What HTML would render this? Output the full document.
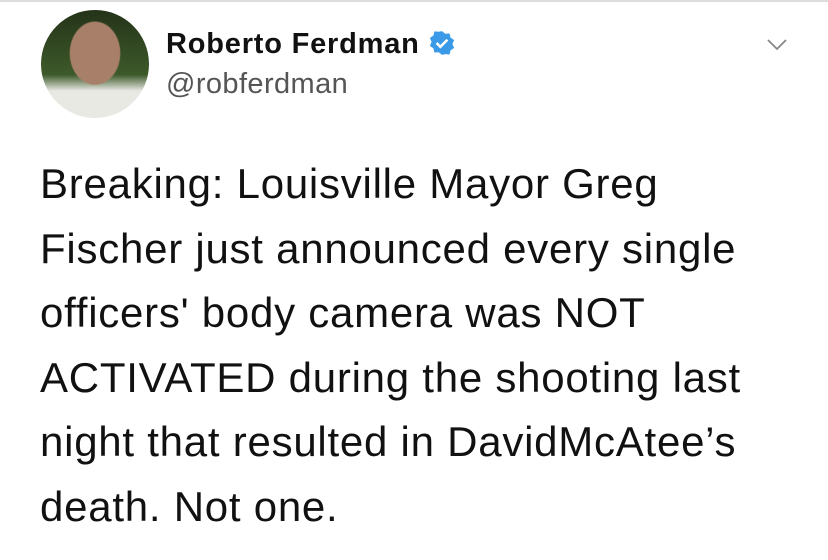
<!DOCTYPE html>
<html><head><style>
body{margin:0;width:828px;height:560px;background:#fff;overflow:hidden;font-family:"Liberation Sans",sans-serif;position:relative}
.top{position:absolute;top:0;left:0;width:828px;height:2px;background:#ddd}
.av{position:absolute;left:41px;top:10px;width:108px;height:108px;border-radius:50%;background:radial-gradient(ellipse 24% 30% at 50% 40%,#a8806a 0 95%,transparent 100%),linear-gradient(#243318,#3d5a2a 60%,#e9e9e4 75%);overflow:hidden}
.name{position:absolute;left:166px;top:28px;font-size:29px;font-weight:bold;color:#111;letter-spacing:0.8px}
.handle{position:absolute;left:166px;top:68px;font-size:29px;color:#555;letter-spacing:0.4px}
.txt{position:absolute;left:40px;top:152px;font-size:42px;line-height:64.5px;color:#111;letter-spacing:0.75px;white-space:nowrap}
</style></head><body>
<div class="top"></div>
<div class="av"></div>
<div class="name">Roberto Ferdman <svg width="26" height="26" viewBox="0 0 24 24" style="vertical-align:-3px"><path d="M12 1l3 2.5 4-.3.9 3.8 3.3 2.3-1.6 3.6 1.6 3.6-3.3 2.3-.9 3.8-4-.3L12 23l-3-2.5-4 .3-.9-3.8L.8 14.7 2.4 11 .8 7.4l3.3-2.3L5 1.3l4 .3z" fill="#3a9ae8"/><path d="M7 12l3.5 3.5L17 9" stroke="#fff" stroke-width="2.4" fill="none"/></svg></div>
<div class="handle">@robferdman</div>
<svg style="position:absolute;left:766px;top:38px" width="22" height="14" viewBox="0 0 22 14"><path d="M2 2l9 9 9-9" stroke="#888" stroke-width="1.8" fill="none"/></svg>
<div class="txt">Breaking: Louisville Mayor Greg<br>Fischer just announced every single<br>officers' body camera was NOT<br>ACTIVATED during the shooting last<br>night that resulted in DavidMcAtee’s<br>death. Not one.</div>
</body></html>
